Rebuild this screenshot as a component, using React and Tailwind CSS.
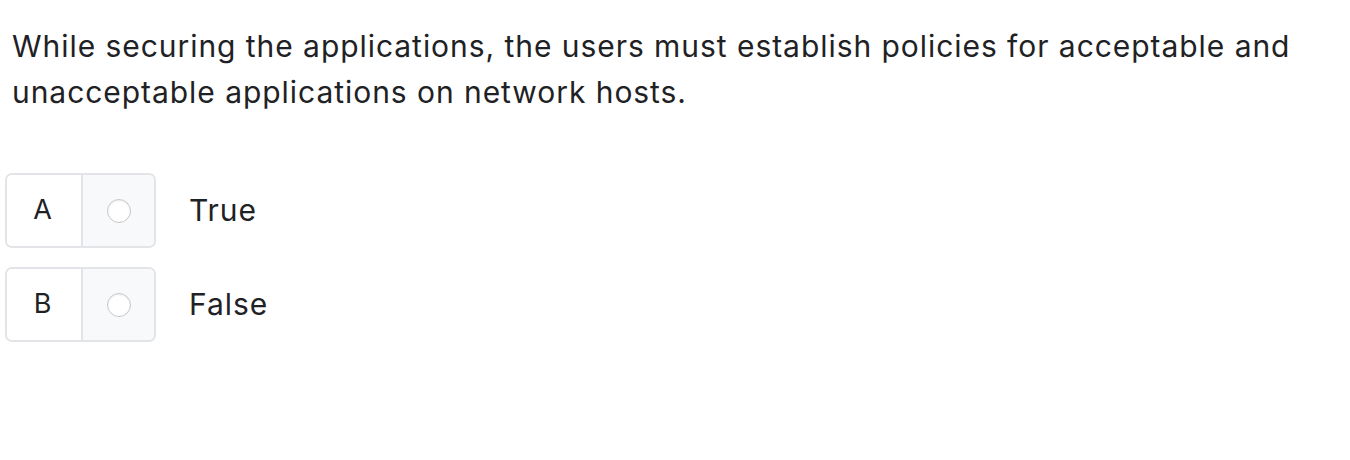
import { useState } from "react";

const OPTIONS = [
  { key: "A", label: "True" },
  { key: "B", label: "False" },
];

const App = () => {
  const [selected, setSelected] = useState(null);

  return (
    <div className="min-h-[460px] bg-white px-3 pt-[23px] text-[#1f2225] font-['Inter',sans-serif]">
      <p className="text-[30px] leading-[46px] tracking-[0.95px]">
        While securing the applications, the users must establish policies for acceptable and
        unacceptable applications on network hosts.
      </p>

      <div className="mt-[58px] flex flex-col gap-[19px] -ml-[7px]">
        {OPTIONS.map((opt) => (
          <label key={opt.key} className="flex items-center cursor-pointer">
            <div className="flex h-[75px] w-[151px] rounded-[7px] border-2 border-[#e2e4e7] overflow-hidden">
              <div className="flex w-[74px] items-center justify-center pr-[3px] bg-white text-[27px]">
                {opt.key}
              </div>
              <div className="flex flex-1 items-center justify-center border-l-2 border-[#e2e4e7] bg-[#f8f9fa]">
                <input
                  type="radio"
                  name="answer"
                  checked={selected === opt.key}
                  onChange={() => setSelected(opt.key)}
                  className="sr-only"
                />
                <span className="block h-[24px] w-[24px] rounded-full border border-[#c8c8c8] bg-white shadow-[inset_0_1px_2px_rgba(0,0,0,0.08)]" />
              </div>
            </div>
            <span className="ml-[33px] text-[30px] tracking-[0.95px]">{opt.label}</span>
          </label>
        ))}
      </div>
    </div>
  );
};

export default App;
